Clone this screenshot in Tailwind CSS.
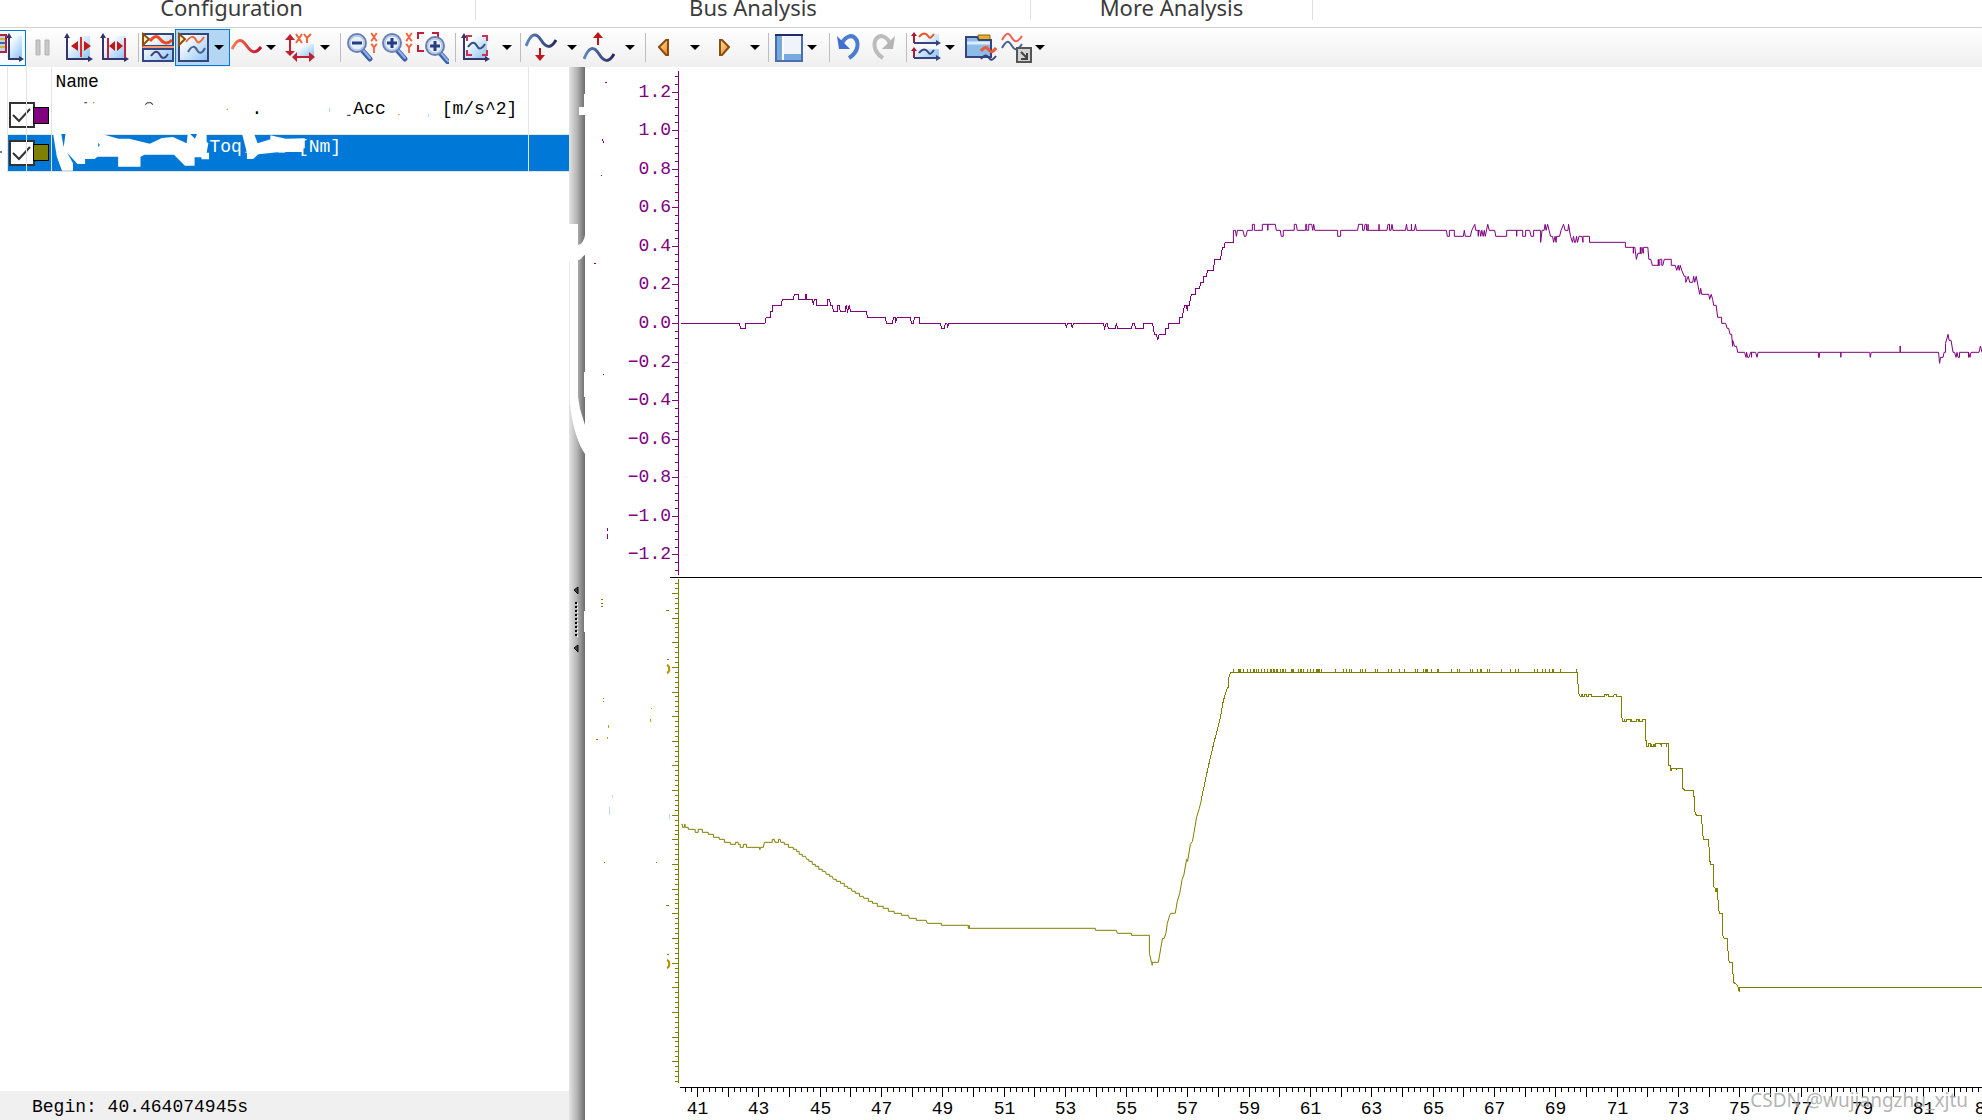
<!DOCTYPE html>
<html lang="en">

<head>
    <meta charset="UTF-8">
    <meta name="viewport" content="width=device-width, initial-scale=1.0">
    <title>Graphics</title>
    <script src="https://cdn.jsdelivr.net/npm/@tailwindcss/browser@4"></script>
</head>

<body class="bg-white h-screen flex flex-col overflow-hidden">

    <!-- Shared gradients and symbols -->
    <svg class="absolute size-0" aria-hidden="true">
        <defs>
            <linearGradient id="sky" x1="0" y1="0" x2="1" y2="1">
                <stop offset="0.2" stop-color="#fff" />
                <stop offset="1" stop-color="#8cc4f4" />
            </linearGradient>
            <linearGradient id="hot" x1="0" y1="0" x2="1" y2="0">
                <stop offset="0" stop-color="#ff7a50" />
                <stop offset="1" stop-color="#c01030" />
            </linearGradient>
            <linearGradient id="cold" x1="0" y1="0" x2="1" y2="0">
                <stop offset="0" stop-color="#5a88c0" />
                <stop offset="1" stop-color="#2b2860" />
            </linearGradient>
            <linearGradient id="gold" x1="0" y1="0" x2="1" y2="1">
                <stop offset="0" stop-color="#ffe2a8" />
                <stop offset="1" stop-color="#f08010" />
            </linearGradient>
            <symbol id="caret" viewBox="0 0 10 5">
                <path d="M0 0h10L5 5z" fill="#000" />
            </symbol>
            <symbol id="axes" viewBox="0 0 32 32">
                <path d="M5 4h22v22H5z" fill="url(#sky)" />
                <path d="M4 4v23h23" fill="none" stroke="#34356f" stroke-width="2" />
                <path d="M1 6l3-5 3 5zM25 24l5 3-5 3z" fill="#34356f" />
            </symbol>
            <symbol id="lens" viewBox="0 0 32 32">
                <path d="M16 18l8 9" stroke="#3c5fa8" stroke-width="5" stroke-linecap="round" />
                <path d="M17 18l7 8" stroke="#8fb4ec" stroke-width="2" stroke-linecap="round" />
                <circle cx="11" cy="11" r="9" fill="#c9dcf5" stroke="#6a7fb4" stroke-width="2" />
                <circle cx="11" cy="11" r="7" fill="#e6effc" stroke="#a9bfe6" />
            </symbol>
            <symbol id="xy" viewBox="0 0 8 24">
                <path d="M1 1l6 9M7 1l-6 9M1 13l3 4 3-4M4 17v6" fill="none" stroke="#f2643c" stroke-width="2" />
            </symbol>
        </defs>
    </svg>

    <!-- Ribbon group captions -->
    <div class="flex h-7 shrink-0 border-b border-[#d2d2d2] text-[#3b3b3b] text-[22px] leading-[14px] font-['Noto_Sans',sans-serif] text-center whitespace-nowrap">
        <div class="w-[476px] h-5 pr-3 border-r border-[#e0e0e0]">Configuration</div>
        <div class="w-[555px] h-5 border-r border-[#e0e0e0]">Bus Analysis</div>
        <div class="w-[282px] h-5 border-r border-[#e0e0e0]">More Analysis</div>
    </div>

    <!-- Toolbar -->
    <div class="flex items-center h-[39px] shrink-0 bg-linear-to-b from-white to-[#efefef]">
        <button aria-label="Legend" class="w-[26px] h-9 border border-l-0 border-[#0078d7] bg-[#f4faff] flex items-center">
            <svg class="w-6 h-8" viewBox="0 0 24 32">
                <path d="M7 4h15v22H7z" fill="url(#sky)" />
                <path d="M0 3h6v17H0" fill="#b8d8f0" stroke="#b02040" stroke-width="2" />
                <path d="M0 7h5M0 15h5" stroke="#d8b030" stroke-width="2" />
                <path d="M0 11h5" stroke="#3b6aa8" stroke-width="2" />
                <path d="M9 4v23h12" fill="none" stroke="#34356f" stroke-width="2" />
                <path d="M6 6l3-5 3 5zM19 24l5 3-5 3z" fill="#34356f" />
            </svg>
        </button>
        <button aria-label="Pause" class="w-8 h-9 flex items-center justify-center">
            <svg class="size-8" viewBox="0 0 32 32">
                <path d="M10 8h4v15h-4zM19 8h4v15h-4z" fill="#c8c8c8" stroke="#b4b4b4" />
            </svg>
        </button>
        <button aria-label="Expand" class="w-[41px] h-9 flex items-center justify-center">
            <svg class="size-8" viewBox="0 0 32 32">
                <use href="#axes" />
                <path d="M8 14l7-5v10zM28 14l-7-5v10z" fill="#c41818" />
                <path d="M18 5v20" stroke="#e02828" stroke-width="2" />
            </svg>
        </button>
        <button aria-label="Compress" class="w-[31px] h-9 flex items-center justify-center">
            <svg class="size-8 shrink-0" viewBox="0 0 32 32">
                <use href="#axes" />
                <path d="M10 14l6-5v10zM24 14l-6-5v10z" fill="#c41818" />
                <path d="M9 6v20M26 6v20" stroke="#c02040" stroke-width="2" />
            </svg>
        </button>
        <span class="w-px h-[29px] bg-[#bdbdbd] ml-2 mr-0.5"></span>
        <button aria-label="Separate view" class="w-[34px] h-9 flex items-center justify-center">
            <svg class="size-8" viewBox="0 0 32 32">
                <path d="M1 2h30v12H1zM1 17h30v12H1z" fill="url(#sky)" stroke="#34457f" stroke-width="2" />
                <path d="M0 15h32" stroke="#ff9a70" stroke-width="2" />
                <path d="M1 2l6 5-6 6z" fill="#fff0c8" stroke="#8a5010" stroke-width="2" />
                <path d="M8 9C12 4 15 3 18 7s7 6 12 1" fill="none" stroke="#f04818" stroke-width="3" />
                <path d="M9 24c4-6 7-5 9-1s5 4 8-1" fill="none" stroke="#3c4080" stroke-width="2" />
            </svg>
        </button>
        <div class="flex items-center w-[55px] h-[37px] border border-[#0078d7] bg-[#b3d7f3]">
            <button aria-label="Common view" class="w-9 h-8 pl-0.5">
                <svg class="size-8" viewBox="0 0 32 32">
                    <path d="M1 2h29v27H1z" fill="url(#sky)" stroke="#34457f" stroke-width="2" />
                    <path d="M1 2l6 5-6 6z" fill="#fff0c8" stroke="#8a5010" stroke-width="2" />
                    <path d="M8 10c5-7 8-6 10-2s4 3 8-3" fill="none" stroke="#f0683c" stroke-width="2" />
                    <path d="M10 20c4-7 7-6 9-2s5 4 8-2" fill="none" stroke="#4a6094" stroke-width="2" />
                </svg>
            </button>
            <button aria-label="View options" class="w-3.5 h-8 flex items-center justify-center">
                <svg class="w-2.5 h-[5px]"><use href="#caret" /></svg>
            </button>
        </div>
        <button aria-label="Line style" class="w-[34px] h-9 flex items-center justify-center">
            <svg class="size-8" viewBox="0 0 32 32">
                <path d="M1 17C6 7 10 6 15 13s9 10 15 2" fill="none" stroke="url(#hot)" stroke-width="3" />
            </svg>
        </button>
        <button aria-label="Line style options" class="w-3.5 h-9 flex items-center justify-center"><svg class="w-2.5 h-[5px]"><use href="#caret" /></svg></button>
        <button aria-label="Axis scaling" class="ml-1 w-9 h-9 flex items-center justify-center">
            <svg class="size-8" viewBox="0 0 32 32">
                <path d="M12 12h18v12H12z" fill="url(#sky)" />
                <path d="M6 5v16M12 25h14" stroke="#c02030" stroke-width="2" />
                <path d="M1 8l5-6 5 6zM1 19l5 5 5-5zM13 20v10l-5-5zM25 20v10l6-5z" fill="#c02030" />
                <path d="M12 2l6 9M18 2l-6 9M20 2l3 4 4-4M23 6v5" fill="none" stroke="#f2643c" stroke-width="2" />
            </svg>
        </button>
        <button aria-label="Axis scaling options" class="w-3.5 h-9 flex items-center justify-center"><svg class="w-2.5 h-[5px]"><use href="#caret" /></svg></button>
        <span class="w-px h-[29px] bg-[#bdbdbd] ml-2 mr-1"></span>
        <button aria-label="Zoom out" class="w-[34px] h-9 flex items-center justify-center">
            <svg class="size-8" viewBox="0 0 32 32">
                <use href="#lens" />
                <path d="M6 11h10" stroke="#283c80" stroke-width="3" />
                <use href="#xy" x="24" y="0" width="8" height="22" />
            </svg>
        </button>
        <button aria-label="Zoom in" class="w-9 h-9 flex items-center justify-center">
            <svg class="size-8" viewBox="0 0 32 32">
                <use href="#lens" />
                <path d="M6 11h10M11 6v10" stroke="#283c80" stroke-width="3" />
                <use href="#xy" x="24" y="0" width="8" height="22" />
            </svg>
        </button>
        <button aria-label="Zoom region" class="w-9 h-9 flex items-center justify-center">
            <svg class="size-8" viewBox="0 0 32 32">
                <path d="M1 7V1h6M15 1h6v5M1 13v6h6" fill="none" stroke="#c02040" stroke-width="2" />
                <use href="#lens" x="7" y="3" />
                <path d="M13 14h10M18 9v10" stroke="#283c80" stroke-width="3" />
            </svg>
        </button>
        <span class="w-px h-[29px] bg-[#bdbdbd] mx-1"></span>
        <button aria-label="Fit" class="w-8 h-9 flex items-center justify-center">
            <svg class="size-8" viewBox="0 0 32 32">
                <use href="#axes" />
                <path d="M7 9V4h5M22 4h5v5M7 18v5h5M22 23h5v-5" fill="none" stroke="#d03050" stroke-width="2" />
                <path d="M8 15c4-6 7-5 9-1s5 3 8-2" fill="none" stroke="#34507f" stroke-width="2" />
            </svg>
        </button>
        <button aria-label="Fit options" class="ml-2 w-3.5 h-9 flex items-center justify-center"><svg class="w-2.5 h-[5px]"><use href="#caret" /></svg></button>
        <span class="w-px h-[29px] bg-[#bdbdbd] ml-1.5 mr-1"></span>
        <button aria-label="Move down" class="w-8 h-9 flex items-center justify-center">
            <svg class="size-8" viewBox="0 0 32 32">
                <path d="M1 14C6 1 11 0 16 8s10 9 15 0" fill="none" stroke="url(#cold)" stroke-width="3" />
                <path d="M15 16v8" stroke="#c01818" stroke-width="2" />
                <path d="M10 23h10l-5 6z" fill="#c01818" />
            </svg>
        </button>
        <button aria-label="Move down options" class="ml-2 w-3.5 h-9 flex items-center justify-center"><svg class="w-2.5 h-[5px]"><use href="#caret" /></svg></button>
        <button aria-label="Move up" class="ml-1 w-8 h-9 flex items-center justify-center">
            <svg class="size-8" viewBox="0 0 32 32">
                <path d="M1 27c5-13 10-13 15-5s10 9 15 0" fill="none" stroke="url(#cold)" stroke-width="3" />
                <path d="M15 5v8" stroke="#c01818" stroke-width="2" />
                <path d="M10 6h10l-5-6z" fill="#c01818" />
            </svg>
        </button>
        <button aria-label="Move up options" class="ml-2 w-3.5 h-9 flex items-center justify-center"><svg class="w-2.5 h-[5px]"><use href="#caret" /></svg></button>
        <span class="w-px h-[29px] bg-[#bdbdbd] ml-2 mr-1"></span>
        <button aria-label="Previous" class="w-7 h-9 flex items-center justify-center">
            <svg class="w-3 h-8" viewBox="0 0 12 32">
                <path d="M1 15l7-7h2v15H8z" fill="url(#gold)" stroke="#8a4c10" stroke-width="2" />
            </svg>
        </button>
        <button aria-label="Previous options" class="ml-2.5 w-3.5 h-9 flex items-center justify-center"><svg class="w-2.5 h-[5px]"><use href="#caret" /></svg></button>
        <button aria-label="Next" class="ml-2 w-7 h-9 flex items-center justify-center">
            <svg class="w-3 h-8" viewBox="0 0 12 32">
                <path d="M11 15L4 8H2v15h2z" fill="url(#gold)" stroke="#8a4c10" stroke-width="2" />
            </svg>
        </button>
        <button aria-label="Next options" class="ml-2.5 w-3.5 h-9 flex items-center justify-center"><svg class="w-2.5 h-[5px]"><use href="#caret" /></svg></button>
        <span class="w-px h-[29px] bg-[#bdbdbd] ml-1.5 mr-1"></span>
        <button aria-label="Layout" class="w-8 h-9 flex items-center justify-center">
            <svg class="size-8" viewBox="0 0 32 32">
                <path d="M3 3h26v26H3z" fill="#f0f4fa" />
                <path d="M3 3h7v26H3zM10 22h19v7H10z" fill="#78aade" />
                <path d="M10 3v26" stroke="#fff" stroke-width="2" />
                <path d="M3 3h26v26H3z" fill="none" stroke="#4a6cb0" stroke-width="2" />
                <path d="M2 3h28" stroke="#262a70" stroke-width="2" />
            </svg>
        </button>
        <button aria-label="Layout options" class="w-3.5 h-9 flex items-center justify-center"><svg class="w-2.5 h-[5px]"><use href="#caret" /></svg></button>
        <span class="w-px h-[29px] bg-[#bdbdbd] ml-2.5 mr-1"></span>
        <button aria-label="Undo" class="w-[30px] h-9 flex items-center justify-center">
            <svg class="size-8 shrink-0" viewBox="0 0 32 32">
                <path d="M9 11c3-6 9-9 13-5s4 14-6 20" fill="none" stroke="#4a7cd0" stroke-width="4" />
                <path d="M4 4l2 13h11z" fill="#3f6fd0" />
            </svg>
        </button>
        <button aria-label="Redo" class="ml-1 w-[30px] h-9 flex items-center justify-center">
            <svg class="size-8 shrink-0" viewBox="0 0 32 32">
                <path d="M23 11c-3-6-9-9-13-5s-4 14 6 20" fill="none" stroke="#bcbcbc" stroke-width="4" />
                <path d="M28 4l-2 13H15z" fill="#b4b4b4" />
            </svg>
        </button>
        <span class="w-px h-[29px] bg-[#bdbdbd] ml-2 mr-1"></span>
        <button aria-label="Synchronize axes" class="w-[30px] h-9 flex items-center justify-center">
            <svg class="size-8 shrink-0" viewBox="0 0 32 32">
                <path d="M5 2h24v9H5zM5 17h24v9H5z" fill="url(#sky)" />
                <path d="M4 3v8M4 18v8" stroke="#b01838" stroke-width="2" />
                <path d="M1 4l3-4 3 4zM1 19l3-4 3 4z" fill="#b01838" />
                <path d="M4 11h23M4 26h23" stroke="#34457f" stroke-width="2" />
                <path d="M26 8l5 3-5 3zM26 23l5 3-5 3z" fill="#34457f" />
                <path d="M9 5c4-5 7-4 9-1s3 2 6-2" fill="none" stroke="#f05020" stroke-width="2" />
                <path d="M9 21c4-5 7-4 9-1s3 2 6-2" fill="none" stroke="#34457f" stroke-width="2" />
            </svg>
        </button>
        <button aria-label="Synchronize options" class="ml-0.5 w-3.5 h-9 flex items-center justify-center"><svg class="w-2.5 h-[5px]"><use href="#caret" /></svg></button>
        <button aria-label="Open" class="ml-2 w-8 h-9 flex items-center justify-center">
            <svg class="size-8" viewBox="0 0 32 32">
                <path d="M13 3h12v6H13z" fill="#e8b020" stroke="#8a6010" />
                <path d="M1 5h11l2 3h12v17H1z" fill="#8cbce8" stroke="#34457f" stroke-width="2" />
                <path d="M2 11h23" stroke="#dcecfa" stroke-width="3" />
                <path d="M16 19c4-5 6-4 8-1s4 2 7-2" fill="none" stroke="#f05830" stroke-width="3" />
                <path d="M16 27c4-5 6-4 8-1s4 2 7-2" fill="none" stroke="#34407f" stroke-width="2" />
            </svg>
        </button>
        <button aria-label="Export" class="ml-1 w-8 h-9 flex items-center justify-center">
            <svg class="size-8" viewBox="0 0 32 32">
                <path d="M1 8c5-9 7-7 10-2s6 4 10-2" fill="none" stroke="#f06050" stroke-width="2" />
                <path d="M1 16c5-9 7-7 10-2s6 4 10-2" fill="none" stroke="#4a6094" stroke-width="2" />
                <path d="M16 16h14v14H16z" fill="#d4d4d4" stroke="#555" stroke-width="2" />
                <path d="M20 20l6 6M26 21v6h-6" fill="none" stroke="#444" stroke-width="2" />
            </svg>
        </button>
        <button aria-label="Export options" class="w-3.5 h-9 flex items-center justify-center"><svg class="w-2.5 h-[5px]"><use href="#caret" /></svg></button>
    </div>

    <div class="flex flex-1 min-h-0">

        <!-- Signal list -->
        <div class="w-[569px] shrink-0 flex flex-col font-['Liberation_Mono',monospace] text-lg">
            <div class="relative flex-1">
                <table class="w-full table-fixed border-collapse leading-5">
                    <colgroup>
                        <col class="w-[7px]">
                        <col class="w-11">
                        <col class="w-[477px]">
                        <col>
                    </colgroup>
                    <thead>
                        <tr class="h-[30px]">
                            <th></th>
                            <th class="border-x border-[#e4e4e4]"></th>
                            <th class="border-r border-[#e4e4e4] pl-1 text-left font-normal">Name</th>
                            <th></th>
                        </tr>
                    </thead>
                    <tbody>
                        <tr class="h-[37px]">
                            <td></td>
                            <td class="border border-t-0 border-[#e4e4e4] p-0">
                                <label class="relative flex items-center pl-px">
                                    <input type="checkbox" checked aria-label="Acc" class="appearance-none size-[26px] shrink-0 border-2 border-[#333] bg-white">
                                    <svg class="absolute left-0 top-0 size-[26px]" viewBox="0 0 26 26"><path d="M5 13l6 6L22 7" fill="none" stroke="#333" stroke-width="2" /></svg>
                                    <span class="-ml-0.5 w-4 h-[17px] border border-black bg-[#800080]"></span>
                                </label>
                            </td>
                            <td class="border-r border-b border-[#e4e4e4] p-0 align-top">
                                <div class="flex pt-0.5"><span class="pl-[200px]">.</span><span class="pl-[91px]">Acc</span><span class="pl-14">[m/s^2]</span></div>
                            </td>
                            <td class="border-b border-[#e4e4e4]"></td>
                        </tr>
                        <tr class="h-[37px] text-white">
                            <td></td>
                            <td class="border border-t-0 border-[#e4e4e4] bg-[#0078d7] p-0">
                                <label class="relative flex items-center pl-px">
                                    <input type="checkbox" checked aria-label="Toq" class="appearance-none size-[26px] shrink-0 border-2 border-[#333] bg-white">
                                    <svg class="absolute left-0 top-0 size-[26px]" viewBox="0 0 26 26"><path d="M5 13l6 6L22 7" fill="none" stroke="#333" stroke-width="2" /></svg>
                                    <span class="-ml-0.5 w-4 h-[17px] border border-black bg-[#808000]"></span>
                                </label>
                            </td>
                            <td class="border-r border-b border-[#e4e4e4] bg-[#0078d7] p-0 align-top">
                                <div class="flex pt-0.5"><span class="pl-[158px]">Toq</span><span class="pl-14">[Nm]</span></div>
                            </td>
                            <td class="border-b border-[#e4e4e4] bg-[#0078d7]"></td>
                        </tr>
                    </tbody>
                </table>

                <!-- Column rule and eraser strokes over the rows -->
                <svg class="absolute left-0 top-0 w-full h-[110px] pointer-events-none" viewBox="0 67 569 110" preserveAspectRatio="xMinYMin">
                    <path d="M26.500 67V171" stroke="#e4e4e4" />
                    <path d="M0 152h2" stroke="#000" />
                    <g transform="scale(.3444 .3333)">
                        <path fill="#fff" d="M154 400H285L308 406L344 416H375L435 431L470 414L502 411L542 430L545 402H600V425L605 430L600 458H607V478H585V472H565V497H537L505 464H420L408 470V500H343V470H283L275 477H247V492H225L195 458L212 490V512H180L165 470z" />
                        <path fill="#0078d7" d="M178 402h12l-5 40zM285 428v14l5-7zM552 402h20l-6 14z" />
                        <path fill="#fff" d="M703 402h35l10 28 37-12v-12l45 10 55-1v30l-65 10-70 8-15 14h-18v-19z" />
                        <path fill="#fff" d="M780 442h100v14h-100z" />
                        <path d="M245 308h8M422 314l6-6h10l6 6" fill="none" stroke="#333" stroke-width="3" />
                        <path d="M270 308h4M658 328h4M1156 344h4" stroke="#e09040" stroke-width="4" />
                        <path d="M957 323v12M1244 342v8" stroke="#90e0f8" stroke-width="3" />
                        <path d="M1008 346h10" stroke="#222" stroke-width="3" />
                        <path d="M712 457h6M808 457h20" stroke="#d8ecff" stroke-width="3" />
                    </g>
                </svg>
            </div>
            <div class="h-[29px] bg-[#f0f0f0] pl-8 pt-1 leading-6">Begin: 40.464074945s</div>
        </div>

        <!-- Splitter -->
        <div class="relative w-4 shrink-0 bg-linear-to-r from-[#e4e4e4] via-[#b4b4b4] to-[#6c6c6c]">
            <svg class="absolute left-0 top-0 w-4 h-[600px]" viewBox="0 67 16 600">
                <path fill="#fff" d="M15 94h1v21h-6v-8h5zM0 224h9v21c3 0 6-4 7-10v20c-3 1-3 5-7 5v137l2 12 5 16v29C9 444 3 425 1 404L0 390zM15 372h1v25h-1zM15 611h1v21h-1z" />
                <path d="M.5 262v142" stroke="#e8e8e8" />
                <path d="M5 590l4-3v7zM5 648l4-3v7z" fill="#444" stroke="#000" />
                <path d="M7 602v34" stroke="#000" stroke-width="2" stroke-dasharray="2 2" />
                <path d="M8.500 603v34" stroke="#fff" stroke-dasharray="2 2" />
            </svg>
        </div>

        <!-- Plot area -->
        <div class="relative flex-1 min-w-0 overflow-hidden">
            <svg class="block w-full h-full" viewBox="585 67 1397 1053" preserveAspectRatio="xMinYMin slice" fill="none">
                <g shape-rendering="crispEdges">
                    <path id="ticksAcc" stroke="#800080" />
                    <path id="ticksToq" stroke="#808000" />
                    <path id="ticksTime" stroke="#000" />
                    <path d="M670 577.500H2400" stroke="#000" />
                </g>

                <!-- Acc -->
                <g stroke="#800080" shape-rendering="crispEdges">
                    <path vector-effect="non-scaling-stroke" transform="translate(680 200) scale(.3954 .3333)"
                        d="M3 370H150L153 385H165V370H215L218 352H228V334H233V316H256L259 298H287L289 283H299V298H318V283H320V298H335L337 316L340 298H344V316H373V298H378L381 316H385L388 334H398V316H403L405 334H418L420 316L424 334L428 316L431 334H471L474 352H519L522 370H537L540 352H545V370L549 352H583L585 370H590L593 352H605V370H659L661 385H669L671 370H675L677 385L679 370H975L977 385L980 370H990L992 385L995 370H1071L1074 385L1078 370H1081L1083 385H1101L1104 370L1106 385H1142L1145 370H1149L1152 385H1172V370H1195L1200 403H1205L1208 421L1212 403H1228V385H1235V370H1263V352H1270L1276 316H1281L1283 334V316H1288L1293 283H1303V265H1314L1317 247H1324V229H1331L1334 211H1349L1352 178H1367L1372 142H1376L1379 127H1400" />
                    <path vector-effect="non-scaling-stroke" transform="translate(1200 200) scale(.4987 .3333)"
                        d="M65 127H67V91H71L73 109L75 91H86L89 109H92L95 91H105V73H109V91H125V73H136V91V73H151L153 91H161L163 109H167V91H189V73H193L195 91H212V73H214V91H218V73H224L226 91L228 73L230 91H276V109H282V91H316L318 73H326V91H329L331 73H334V91H337V73V91H359V73V91H375L377 73H380V91H383L385 73L387 91H412L414 73L416 91H424V73V91H430L432 73L434 91H494L496 109H500V91H510V109H528L530 91L532 109H542L545 91L551 73L553 91H558V109V91H561L563 109L565 91L568 109L570 91L572 109L577 73L580 91H591L593 109H615V91H635V109V91H647V109H653V91H661L664 109H669V91H683V127L686 91H690L692 73L694 91L697 73L700 91L703 109H707L709 127L712 109L714 127L715 109H721L724 91L729 73L732 91H738L739 73L743 109L747 127L749 109L751 127H753L755 109L757 127L760 109H766L768 127V109H781V127H853V142H869V160V142H872L875 178L878 160H883V142V160H886V142L889 160V142H898L900 178H904L907 196H919V178V196H922V178H926V196H928L931 178H945V196H953L956 211L959 196L961 211L963 196L966 211L971 229H974V247L979 229L982 247H988L990 229L992 247L995 229L999 260L1002 283L1004 265L1006 283H1020L1022 298L1025 283L1028 298L1030 316H1035L1038 352H1046V370H1054L1057 385H1060L1063 403H1066L1068 439V421L1072 439H1076L1078 457H1092L1095 472L1096 457L1098 472H1101L1104 457H1106V472V457H1114L1117 472L1119 457H1240V472H1242V457H1285V472V457H1343L1344 472L1346 457H1404V438V457H1481L1483 490L1485 472H1490L1492 457H1495V430L1500 403L1502 421H1506L1510 457H1513L1516 472L1518 457L1520 472H1523V457H1541V472V457L1544 472L1546 457H1562L1565 438L1568 457" />
                </g>

                <!-- Toq -->
                <g stroke="#808000" shape-rendering="crispEdges">
                    <path vector-effect="non-scaling-stroke" transform="translate(670 800) scale(.3444 .3333)"
                        d="M33 73H36V82H42V73H44V82H53V88H73V97H82V88H94V97H111V103H126V112H143V118H158V127H175V133H190V127H198V133H204V142H213V133H222V142H260V148H262V142H271L274 127H297V118H303V124H306V127H315V118H320L322 127H332V133H344V142H358V148H367V154H375V163H384V169H393L397 178H403V184H413V193H422V199H432V208H442V214H451L454 223H463V229H471L474 238H483V244H495V250H506V259H516V265H526L529 274H538V280H550V289H561L563 295H576V304H588V310H602V319H619V325H634V334H651V340H672V346H692L695 355H715V361H744L747 370H788V376H866V385H869V376V385H1235V391H1296L1299 400H1340V406H1392V460L1398 487H1400V496V487H1418L1430 415H1435L1440 400L1444 370L1451 346L1454 340H1467L1473 304L1480 280L1487 238L1492 225L1500 178L1503 184L1511 133L1517 124L1529 52L1537 25L1543 0" />
                    <path vector-effect="non-scaling-stroke" transform="translate(1200 640) scale(.3827 .3333)"
                        d="M3 480L22 378L37 305L52 240L61 182L72 142H75V115L80 97H986L989 157L993 169H997V163H1000V169H1004V163H1011V169H1016V163H1024V169H1057V163H1062V169V163H1067V169H1080L1083 163H1088V169H1101V228L1105 240V244H1108V238V244H1115V238H1125V244H1128V238V244H1140V238H1145V244H1149V238V244H1155V238H1165V300L1168 311V320H1171V311H1177V320H1181V311V320H1184V311V320H1187V311V320H1190V311H1203L1207 320V311H1218V320V311H1224V376H1229V391H1231V385H1244V391V385H1260V442L1266 451H1290L1293 516L1297 526H1310L1315 598H1329L1332 664H1335V673H1342V740L1346 745V754H1349V745V754H1352V745L1355 810L1358 820H1366V886L1370 895H1378L1381 960L1384 967H1391L1394 1026L1400 1032L1405 1038L1409 1056L1411 1042H3000" />
                    <path id="ripple" />
                </g>

                <!-- Leftovers of the erased captions -->
                <g shape-rendering="crispEdges" stroke="#808000">
                    <path d="M601 599.500h2M601 603.500h2M601 606.500h2M603 698.500h1M603 701.500h1M596 739.500h2M656 862.500h1M604 862.500h1" />
                    <path d="M666 610.500h3M667 659.500h2M666 905.500h3M667 954.500h2" />
                    <path d="M651.500 708v1M650.500 719v3M608.500 725v3M607.500 737v2" stroke="#c8a000" />
                    <path d="M612.500 795v3M609.500 807v8M669.500 814v5" stroke="#b8dcec" />
                    <path d="M605 82.500h2M602 139.500l2 3M601 175.500h1M594 263.500h2M603 374.500h1M607.500 528v3M607.500 534v5" stroke="#800080" />
                </g>
                <path d="M667 665c3 1 3 7 0 8M667 960c3 1 3 7 0 8" stroke="#b89000" stroke-width="2" />

                <g id="labelsAcc" fill="#800080" class="font-['Liberation_Mono',monospace] text-lg" text-anchor="end"></g>
                <g id="labelsTime" fill="#000" class="font-['Liberation_Mono',monospace] text-lg" text-anchor="middle"></g>
            </svg>
            <p class="absolute right-3.5 bottom-2 text-[19px] leading-6 text-[#a0a0a0]/80 font-['Noto_Sans',sans-serif] whitespace-nowrap">CSDN @wujiangzhu_xjtu</p>
        </div>
    </div>

    <script>
        const NS = 'http://www.w3.org/2000/svg';

        function addLabel(groupId, x, y, text) {
            const t = document.createElementNS(NS, 'text');
            t.setAttribute('x', x);
            t.setAttribute('y', y);
            t.textContent = text;
            document.getElementById(groupId).appendChild(t);
        }

        // Acc axis, -1.28 .. 1.28, label every 0.2
        let d = 'M678.5 71V575';
        for (let i = -32; i <= 32; i++) {
            const y = Math.round(323 - i * 7.714) + 0.5;
            const major = i % 5 === 0;
            d += `M${major ? 672 : 675} ${y}H678`;
            if (major) addLabel('labelsAcc', 671, Math.floor(y) + 5, (i * 0.04).toFixed(1).replace('-0.0', '0.0').replace('-', '−'));
        }
        document.getElementById('ticksAcc').setAttribute('d', d);

        // Toq axis
        d = 'M678.5 579V1083';
        for (let i = -2; i <= 99; i++) {
            const y = Math.round(593 + i * 4.928) + 0.5;
            d += `M${i % 5 === 0 ? 672 : 675} ${y}H678`;
        }
        document.getElementById('ticksToq').setAttribute('d', d);

        // Time axis, label every second unit
        d = 'M680 1087.5H2400';
        for (let i = -2; i <= 230; i++) {
            const x = Math.round(697 + i * 6.131) + 0.5;
            d += `M${x} 1087V${i % 5 === 0 ? 1097 : 1092}`;
            if (i >= 0 && i % 10 === 0) addLabel('labelsTime', x, 1114, 41 + i / 5);
        }
        document.getElementById('ticksTime').setAttribute('d', d);

        // Ripple on the torque plateau
        const ripple = [1233, 1238, 1239, 1240, 1243, 1247, 1250, 1253, 1254, 1256, 1258, 1261, 1264, 1267, 1270, 1271, 1273, 1274, 1276, 1277, 1280, 1282, 1283, 1285, 1291, 1292, 1293, 1298, 1300, 1301, 1303, 1307, 1310, 1313, 1316, 1317, 1318, 1319, 1321, 1335, 1343, 1346, 1349, 1351, 1360, 1362, 1365, 1375, 1377, 1388, 1391, 1399, 1404, 1415, 1417, 1423, 1425, 1426, 1427, 1431, 1437, 1438, 1451, 1457, 1459, 1470, 1472, 1477, 1480, 1481, 1487, 1489, 1501, 1510, 1515, 1518, 1534, 1537, 1542, 1545, 1549, 1552, 1553, 1560, 1576];
        document.getElementById('ripple').setAttribute('d', ripple.map(x => `M${x}.5 669V672`).join(''));
    </script>
</body>

</html>
